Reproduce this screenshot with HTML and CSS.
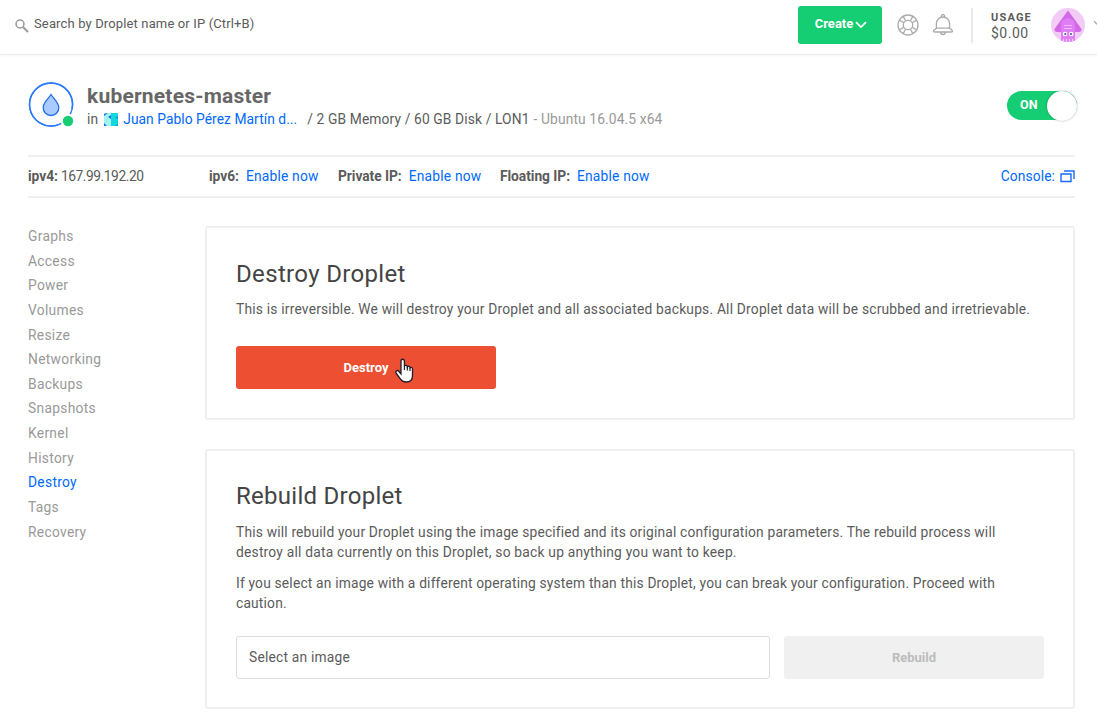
FILE: index.html
```html
<!DOCTYPE html>
<html lang="en">
<head>
<meta charset="utf-8">
<title>kubernetes-master</title>
<link rel="stylesheet" href="styles.css">
</head>
<body>
<header class="topbar">
  <label class="search">
    <svg class="search-icon" width="14" height="14" viewBox="0 0 14 14" fill="none" stroke="#999"><circle cx="5" cy="5" r="4" stroke-width="1.5"/><path d="M8 8l5 5" stroke-width="2"/></svg>
    <span class="search-text">Search by Droplet name or IP (Ctrl+B)</span>
  </label>
  <div class="tools">
    <button class="create"><span>Create</span><svg width="12" height="8" viewBox="0 0 12 8" fill="none" stroke="#fff" stroke-width="1.7"><path d="M1 1.2l5 4.8 5-4.8"/></svg></button>
    <svg class="help" width="22" height="22" viewBox="0 0 22 22" fill="none" stroke="#aaa" stroke-width="1.3"><circle cx="11" cy="11" r="10"/><circle cx="11" cy="11" r="4.7"/><path d="M6.2 2.4l2.4 4.3M2.4 6.2l4.3 2.4M15.8 2.4l-2.4 4.3M19.6 6.2l-4.3 2.4M6.2 19.6l2.4-4.3M2.4 15.8l4.3-2.4M15.8 19.6l-2.4-4.3M19.6 15.8l-4.3-2.4"/></svg>
    <svg class="bell" width="22" height="22" viewBox="0 0 22 22" fill="none" stroke="#aaa" stroke-width="1.3" stroke-linejoin="round"><path d="M9.4 3V2.2a1.6 1.6 0 0 1 3.2 0V3M4.4 14.2V9.6a6.6 6.6 0 0 1 13.2 0v4.6M4.4 14.2h13.2M4.4 14.2c-.5 1-3 1.600-3 2.800 0 .7.600 1 1.300 1h16.600c.7 0 1.300-.300 1.300-1 0-1.200-2.500-1.800-3-2.800M8.700 18.200a2.300 2.300 0 0 0 4.600 0"/></svg>
    <div class="usage"><span class="usage-label">USAGE</span><span class="usage-value">$0.00</span></div>
    <svg class="avatar" width="34" height="34" viewBox="0 0 34 34">
      <clipPath id="face"><circle cx="17" cy="17" r="17"/></clipPath>
      <g clip-path="url(#face)"><path fill="#f2ccf7" d="M0 0h34v34H0z"/><path fill="#d268e6" d="M17 2.500L30.500 21q.3 3-3 3H6.500q-3.300 0-3-3z"/><path fill="#df7df5" d="M10 34V17c0-9 14-9 14 0v17z"/><path d="M13 17.500h8M13 20.500h8" stroke="#f2b9fb"/><circle cx="14" cy="26" r="2.300" fill="#fff"/><circle cx="20.300" cy="26" r="2.300" fill="#fff"/><circle cx="14.300" cy="26" r="1.100" fill="#4a4ab4"/><circle cx="20" cy="26" r="1.100" fill="#4a4ab4"/><path d="M12.500 31v4M15.500 31v4M18.500 31v4M21.500 31v4" stroke="#f5cffa" stroke-width="1.200"/></g>
    </svg>
    <svg class="account-caret" width="12" height="8" viewBox="0 0 12 8" fill="none" stroke="#aaa" stroke-width="1.300"><path d="M1 1.200l5 4.800 5-4.800"/></svg>
  </div>
</header>

<main class="page">
  <section class="droplet">
    <svg class="droplet-icon" width="46" height="46" viewBox="0 0 46 46"><path d="M44.100 27A21.500 21.500 0 1 0 30 42.900" fill="none" stroke="#2a7aff" stroke-width="1.400"/><circle cx="23" cy="22.500" r="21.500" fill="none" stroke="#2a7aff" stroke-width="1.400"/><path d="M23 12.500c3 4.700 7.800 8.300 7.800 13.200a7.800 7.800 0 0 1-15.600 0c0-4.900 4.800-8.500 7.800-13.200z" fill="#aacbff" stroke="#1f6fe8" stroke-width="1.300"/><circle cx="40" cy="39" r="7.200" fill="#fff"/><circle cx="40" cy="39" r="5.200" fill="#15cd72"/></svg>
    <div class="identity">
      <h1 class="name">kubernetes-master</h1>
      <p class="specs">
        <span class="in">in</span>
        <svg class="project-icon" width="14" height="13" viewBox="0 0 14 13"><path fill="#a1f5ee" d="M0 0h7v13H0z"/><path fill="#10d8dc" d="M7 0h7v13H7z"/><path fill="#1c6fe8" d="M0 1l3-1h1L0 3zM4 4l3-2v4zM0 13v-3l3 3z"/><path fill="#1c8fe8" d="M14 3l-3 2 3 1zM14 11l-3 2h3z"/></svg>
        <a class="project">Juan Pablo Pérez Martín d...</a>
        <span class="size">/ 2 GB Memory / 60 GB Disk / LON1</span>
        <span class="os">- Ubuntu 16.04.5 x64</span>
      </p>
    </div>
    <div class="toggle"><span class="toggle-text">ON</span><span class="knob"></span></div>
  </section>

  <section class="network">
    <div class="address ipv4"><b>ipv4:</b><span>167.99.192.20</span></div>
    <div class="address ipv6"><b>ipv6:</b><a>Enable now</a></div>
    <div class="address private"><b>Private IP:</b><a>Enable now</a></div>
    <div class="address floating"><b>Floating IP:</b><a>Enable now</a></div>
    <a class="console"><span>Console:</span><svg width="15" height="13" viewBox="0 0 15 13" fill="none" stroke="#1a6aff" stroke-width="1.400"><path d="M1 4h10v7.500H1zM4 1h10v8"/></svg></a>
  </section>

  <div class="content">
    <nav class="menu">
      <a>Graphs</a><a>Access</a><a>Power</a><a>Volumes</a><a>Resize</a><a>Networking</a><a>Backups</a><a>Snapshots</a><a>Kernel</a><a>History</a><a class="active">Destroy</a><a>Tags</a><a>Recovery</a>
    </nav>
    <div class="panels">
      <section class="panel destroy-panel">
        <h2>Destroy Droplet</h2>
        <p class="warning">This is irreversible. We will destroy your Droplet and all associated backups. All Droplet data will be scrubbed and irretrievable.</p>
        <button class="destroy">Destroy
          <svg class="pointer" width="19" height="25" viewBox="0 0 19 25"><path d="M6 16V3.200c0-2.600 3.400-2.600 3.400 0V8c.5-1 2.700-.9 2.900.7.700-.8 2.600-.5 2.700.9.900-.6 2.500-.1 2.500 1.400v6.500c0 3.500-2 6.500-6.300 6.500-3.500 0-5-1.600-6.400-3.900L1.300 15.500C-.2 13.300 2 11.700 3.600 13z" fill="#fff" stroke="#1d1d2b" stroke-width="1.300"/><path d="M9.400 8v4M12.300 9v3.500M15 10v3" stroke="#1d1d2b" stroke-width="1.200"/></svg>
        </button>
      </section>
      <section class="panel rebuild-panel">
        <h2 class="rebuild-title">Rebuild Droplet</h2>
        <p>This will rebuild your Droplet using the image specified and its original configuration parameters. The rebuild process will<br><span class="keep">destroy all data currently on this Droplet, so back up anything you want to keep.</span></p>
        <p>If you select an image with a different operating system than this Droplet, you can break your configuration. Proceed with<br>caution.</p>
        <div class="form"><div class="select">Select an image</div><button class="rebuild">Rebuild</button></div>
      </section>
    </div>
  </div>
</main>
</body>
</html>
```
FILE: styles.css
```css
* { box-sizing: border-box; }
body { margin: 0; height: 716px; overflow: hidden; background: #fff; color: #5b5b5b; font: 13.8px/20px Roboto, "Liberation Sans", sans-serif; letter-spacing: .2px; }
h1, h2, p { margin: 0; }
button { border: 0; padding: 0; font: 700 13px/20px Roboto, sans-serif; color: #fff; border-radius: 3px; }
a { color: #0069ff; }
b { font-weight: 700; letter-spacing: -.05px; }
svg { display: block; flex: none; }

.topbar { height: 55px; padding: 6px 0 0 15px; display: flex; align-items: flex-start; justify-content: space-between; border-bottom: 1px solid #ebebeb; box-shadow: 0 1px 3px rgba(0, 0, 0, .04); overflow: hidden; }
.search { display: flex; align-items: center; padding-top: 8px; gap: 5px; font-size: 13px; letter-spacing: .14px; }
.search-icon { margin-top: 3px; }
.tools { display: flex; flex: none; margin-right: -8px; }
.create { width: 84px; height: 38px; background: #15cd72; display: flex; align-items: center; justify-content: center; gap: 2px; padding: 0 0 3px 2px; }
.create svg { margin-top: 2px; }
.help { margin: 8px 0 0 15px; }
.bell { margin: 8px 0 0 13px; }
.usage { height: 35px; margin: 2px 0 0 17px; padding: 0 0 0 18px; border-left: 2px solid #e8e8e8; width: 80px; display: flex; flex-direction: column; font-size: 14px; line-height: 17px; letter-spacing: .5px; }
.usage-label { font-size: 11px; font-weight: 700; letter-spacing: 1.2px; line-height: 19px; height: 17px; }
.avatar { margin: 2px 0 0 0; }
.account-caret { margin: 14px 0 0 8px; }

.page { padding: 26px 22px 0 28px; }
.droplet { display: flex; height: 74px; }
.droplet-icon { margin-top: 1px; }
.identity { flex: 1; padding: 3px 0 0 13px; }
.name { font-size: 21px; line-height: 24px; font-weight: 700; letter-spacing: .2px; color: #676767; }
.specs { display: flex; align-items: center; height: 22px; white-space: nowrap; letter-spacing: .12px; }
.project-icon { margin-left: 6px; }
.project { margin-left: 5px; width: 184px; letter-spacing: .05px; }
.os { color: #999; margin-left: 4px; }
.toggle { width: 70px; height: 29px; margin: 10px -2px 0 0; border-radius: 15px; background: #15cd72; display: flex; align-items: center; justify-content: space-between; padding-left: 13px; color: #fff; font-size: 12.5px; font-weight: 700; }
.toggle-text { padding-bottom: 2px; letter-spacing: .2px; }
.knob { width: 30px; height: 30px; border-radius: 50%; background: #fff; box-shadow: 0 0 2px rgba(0, 0, 0, .35); }

.network { height: 43px; border: solid #f0f0f0; border-width: 2px 0; padding-bottom: 1px; display: flex; align-items: center; white-space: nowrap; }
.address { display: flex; }
.ipv4 { width: 181px; gap: 3px; letter-spacing: -.45px; }
.ipv6 { width: 129px; gap: 7px; }
.private { width: 162px; gap: 7px; }
.floating { gap: 7px; }
.console { margin-left: auto; display: flex; align-items: center; gap: 5px; letter-spacing: .1px; }

.content { display: flex; padding-top: 28px; }
.menu { width: 177px; display: flex; flex-direction: column; }
.menu a { height: 24.65px; line-height: 20px; color: #999; letter-spacing: .3px; }
.menu .active { color: #0069ff; }
.panels { flex: 1; display: flex; flex-direction: column; gap: 29px; min-width: 0; }
.panel { border: 2px solid #f0f0f0; border-radius: 3px; padding: 29px 29px 0; white-space: nowrap; }
.destroy-panel { height: 194px; }
.rebuild-panel { height: 260px; }
h2 { font-size: 24px; line-height: 34px; font-weight: 400; letter-spacing: .34px; color: #444; margin-bottom: 8px; }
.warning { margin-bottom: 27px; letter-spacing: .2px; }
.destroy { position: relative; display: block; width: 260px; height: 43px; background: #ed4f32; }
.pointer { position: absolute; left: 159px; top: 12px; }
.panel .rebuild-title { line-height: 32px; margin-bottom: 10px; letter-spacing: .27px; }
.rebuild-panel p { margin-bottom: 11px; letter-spacing: .18px; }
.rebuild-panel .keep { letter-spacing: .22px; }
.rebuild-panel p + p { margin-bottom: 23px; }
.form { display: flex; gap: 14px; }
.select { width: 534px; height: 43px; border: 1px solid #ddd; border-radius: 3px; padding: 10px 12px; }
.rebuild { width: 260px; height: 43px; background: #f0f0f0; color: #bcbcbc; }
```
